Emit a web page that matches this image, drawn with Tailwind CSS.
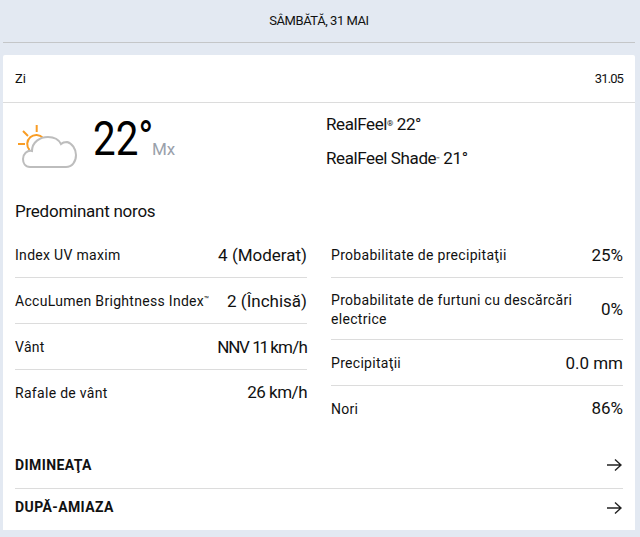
<!DOCTYPE html>
<html lang="en">
<head>
    <meta charset="UTF-8">
    <title>Vreme</title>
    <script src="https://cdn.jsdelivr.net/npm/@tailwindcss/browser@4"></script>
</head>
<body class="bg-[#e3e9f2] font-['Roboto',sans-serif] text-[#111] h-[537px] overflow-hidden">
    <div class="ml-[3px] mr-[5px] h-[43px] border-b border-[#c4c6c8] flex justify-center items-center text-[13px] tracking-[-0.45px]">SÂMBĂTĂ, 31 MAI</div>

    <div class="ml-[3px] mr-[5px] mt-3 h-[475px] bg-white rounded-t-[2px]">
        <div class="h-[48px] border-b border-[#dcdcdc] px-3 flex justify-between items-center text-[13px]">
            <span>Zi</span>
            <span class="tracking-[-0.9px]">31.05</span>
        </div>

        <div class="flex h-[86px]">
            <div class="w-[316px] flex pl-3">
                <svg class="mt-[17px] w-[64px] h-[50px]" viewBox="0 0 64 50" fill="none" stroke-width="2">
                    <path d="M21.7 5v7M8 11l5 5M3 24h7" stroke="#f99d25"/>
                    <path d="M28 18A9 9 0 0 0 14.5 30" stroke="#f99d25"/>
                    <path d="M15 47C10 47 8 43 8 39 8 34 12 30 17 31 17 22 25 17 33 17 39 17 44 20 46 24 48 22 50 22 52 22 57 23 61 29 61 35 61 42 57 47 51 47Z" stroke="#bdbdbd" fill="#fff"/>
                </svg>
                <span class="ml-[14px] mt-[8px] text-[48px] leading-[56px] text-black scale-x-[0.84] origin-left">22°</span>
                <span class="ml-[-13px] mt-[34px] text-[17px] leading-[24px] text-[#9aa1ab]">Mx</span>
            </div>
            <div class="pl-[7px] pt-[9px] text-[17px] leading-[24px] tracking-[-0.4px]">
                <div>RealFeel<sup class="text-[8px]">®</sup> 22°</div>
                <div class="mt-[10px]">RealFeel Shade<sup class="text-[6px]">™</sup> 21°</div>
            </div>
        </div>

        <div class="px-3 mt-[10px] text-[17px] leading-[24px] tracking-[-0.25px]">Predominant noros</div>

        <div class="grid grid-cols-2 gap-x-6 px-3 mt-[9px] text-[14px] tracking-[0.3px]">
            <div>
                <div class="h-[46px] pt-[2px] border-b border-[#dcdcdc] flex justify-between items-center"><span>Index UV maxim</span><span class="text-[17px] tracking-normal">4 (Moderat)</span></div>
                <div class="h-[46px] pt-[2px] border-b border-[#dcdcdc] flex justify-between items-center"><span>AccuLumen Brightness Index<sup class="text-[8px]">™</sup></span><span class="text-[17px] tracking-normal">2 (Închisă)</span></div>
                <div class="h-[46px] pt-[2px] border-b border-[#dcdcdc] flex justify-between items-center"><span>Vânt</span><span class="text-[17px] tracking-[-0.8px]"><span class="tracking-[-1.2px]">NNV</span> <span class="tracking-[-2.2px]">11</span> km/h</span></div>
                <div class="h-[46px] flex justify-between items-center"><span>Rafale de vânt</span><span class="text-[17px] tracking-[-0.5px]">26 km/h</span></div>
            </div>
            <div>
                <div class="h-[46px] pt-[2px] border-b border-[#dcdcdc] flex justify-between items-center"><span>Probabilitate de precipitaţii</span><span class="text-[17px] tracking-normal">25%</span></div>
                <div class="h-[62px] pt-[2px] border-b border-[#dcdcdc] flex justify-between items-center"><span class="w-[255px] leading-[19px]">Probabilitate de furtuni cu descărcări electrice</span><span class="text-[17px] tracking-normal">0%</span></div>
                <div class="h-[46px] pt-[2px] border-b border-[#dcdcdc] flex justify-between items-center"><span>Precipitaţii</span><span class="text-[17px] tracking-normal">0.0 mm</span></div>
                <div class="h-[46px] flex justify-between items-center"><span>Nori</span><span class="text-[17px] tracking-normal">86%</span></div>
            </div>
        </div>

        <div class="mx-3 mt-[13px] text-[14px] font-bold tracking-[0.4px]">
            <div class="h-[44px] pb-[3px] border-b border-[#dcdcdc] flex justify-between items-center">
                <span>DIMINEAŢA</span>
                <svg class="w-4 h-4 mr-[1px]" viewBox="0 0 16 16" fill="none" stroke="#222" stroke-width="1.4"><path d="M1 8h14M9 2.5 15 8l-6 5.5"/></svg>
            </div>
            <div class="h-[41px] pb-1 flex justify-between items-center">
                <span>DUPĂ-AMIAZA</span>
                <svg class="w-4 h-4 mr-[1px]" viewBox="0 0 16 16" fill="none" stroke="#222" stroke-width="1.4"><path d="M1 8h14M9 2.5 15 8l-6 5.5"/></svg>
            </div>
        </div>
    </div>
</body>
</html>
